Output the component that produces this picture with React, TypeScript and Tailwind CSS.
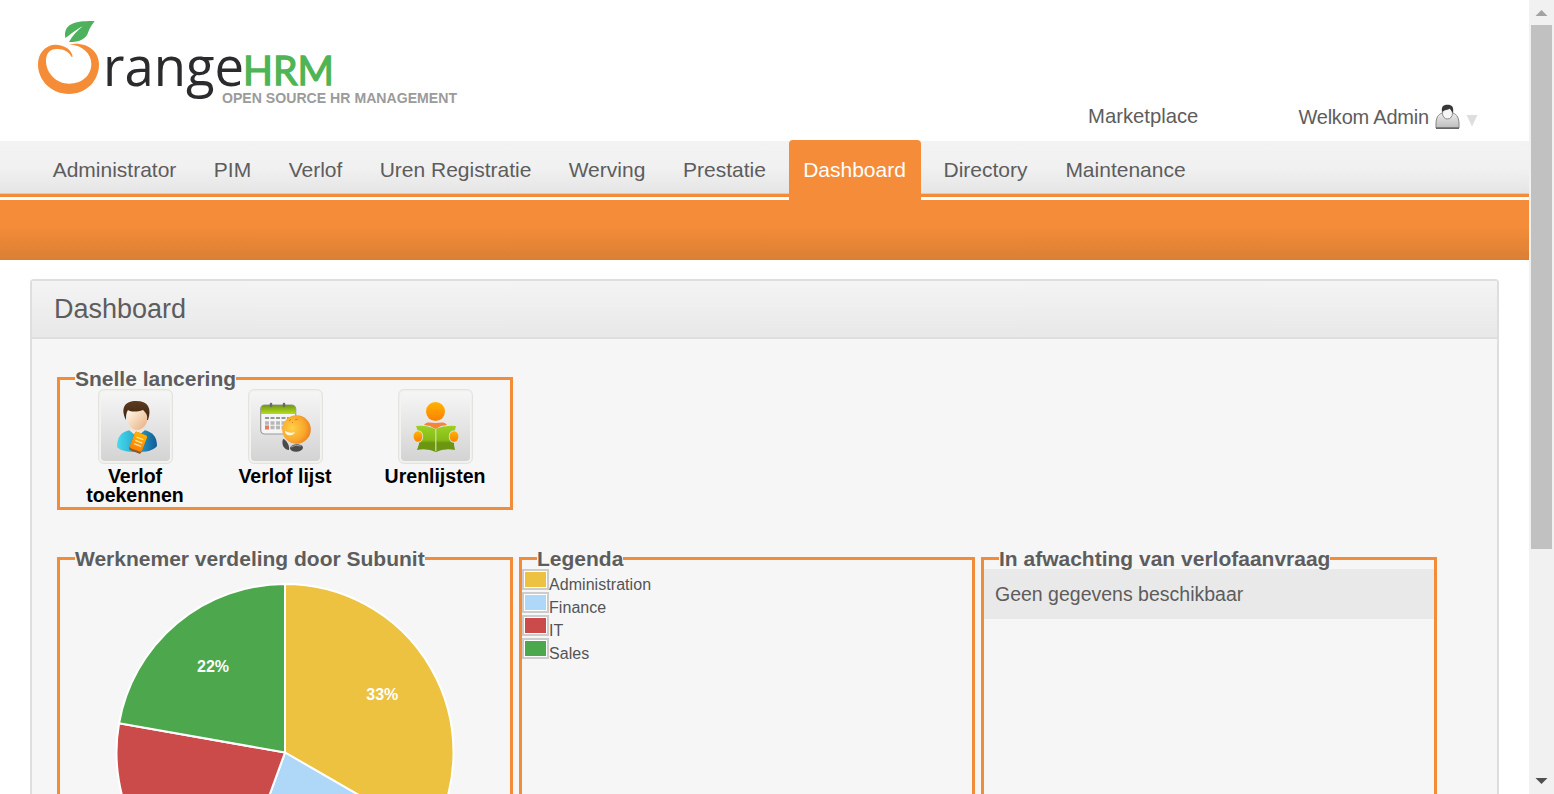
import React from "react";

const tabs = [
  { label: "Administrator", box: "w-[154px]" },
  { label: "PIM", box: "w-[67px]" },
  { label: "Verlof", box: "w-[84px]" },
  { label: "Uren Registratie", box: "w-[181px]" },
  { label: "Werving", box: "w-[107px]" },
  { label: "Prestatie", box: "w-[113px]" },
  { label: "Dashboard", box: "w-[132px]" },
  { label: "Directory", box: "w-[115px]" },
  { label: "Maintenance", box: "w-[150px]" },
];

const subunits = [
  { name: "Administration", swatch: "bg-[#edc240]" },
  { name: "Finance", swatch: "bg-[#afd8f8]" },
  { name: "IT", swatch: "bg-[#cb4b4b]" },
  { name: "Sales", swatch: "bg-[#4da74d]" },
];

function Logo() {
  return (
    <svg width="440" height="120" viewBox="0 0 440 120" className="block">
      <g transform="scale(0.33333)">
        <path
          d="M128 140C126 118 100 103 74 104C44 106 24 132 24 163C24 214 66 252 117 252C168 252 207 214 207 163C207 124 172 94 117 103C158 106 184 132 184 162C184 196 156 221 118 221C78 221 48 188 48 152C48 130 60 117 80 117C100 116 118 126 124 140Z"
          fill="#f58d38"
        />
        <path
          d="M194 33C150 33 98 34 106 84C120 75 134 62 158 49C140 65 126 78 117 96C150 96 170 86 175 65C186 42 190 40 194 33Z"
          fill="#4db25b"
        />
      </g>
      <text x="73" y="75.500" fontFamily="Open Sans" fontSize="55" fill="#2b2b2d" textLength="141" lengthAdjust="spacingAndGlyphs">range</text>
      <text x="213" y="74.500" fontFamily="Lato" fontSize="40.5" fill="#4db556" stroke="#4db556" strokeWidth="1.3" textLength="91" lengthAdjust="spacingAndGlyphs">HRM</text>
      <text x="192" y="93" fontFamily="Liberation Sans" fontWeight="700" fontSize="15.5" fill="#9b9b9b" textLength="235" lengthAdjust="spacingAndGlyphs">OPEN SOURCE HR MANAGEMENT</text>
    </svg>
  );
}

function UserIcon() {
  return (
    <svg width="25" height="26" viewBox="0 0 25 26" className="block">
      <defs>
        <linearGradient id="coat" x1="0" y1="0" x2="0" y2="1">
          <stop offset="0" stopColor="#ececec" />
          <stop offset="1" stopColor="#bdbdbd" />
        </linearGradient>
      </defs>
      <path d="M1 24V20C1 14 3 10.500 7 9H18C22 10.500 24 14 24 20V24Z" fill="url(#coat)" stroke="#858585" strokeWidth="1" />
      <path d="M1 24.200H24" stroke="#555" strokeWidth="1.300" />
      <ellipse cx="12.500" cy="9.500" rx="5" ry="5.500" fill="#f6f6f6" stroke="#888" strokeWidth="1" />
      <path d="M7 8C6 2 9 .8 12.500 .8C17 .8 19 3 18 9C17 8 16 6 15 4.500C13 6 9 6 7 8Z" fill="#383838" />
    </svg>
  );
}

function Tile({ children }: { children: React.ReactNode }) {
  return (
    <svg width="75" height="75" viewBox="0 0 75 75" className="block">
      <defs>
        <linearGradient id="tile" x1="0" y1="0" x2="0" y2="1">
          <stop offset="0" stopColor="#f6f6f6" />
          <stop offset="1" stopColor="#d3d3d3" />
        </linearGradient>
        <linearGradient id="hair" x1="0" y1="0" x2="0" y2="1">
          <stop offset="0" stopColor="#5c3b20" />
          <stop offset="1" stopColor="#3f2512" />
        </linearGradient>
        <linearGradient id="face" x1="0" y1="0" x2="1" y2="1">
          <stop offset="0.200" stopColor="#fff1e0" />
          <stop offset="1" stopColor="#e5a977" />
        </linearGradient>
        <linearGradient id="shirt" x1="0" y1="0" x2="1" y2="0">
          <stop offset="0" stopColor="#46dced" />
          <stop offset="0.450" stopColor="#2ba9cf" />
          <stop offset="1" stopColor="#125c96" />
        </linearGradient>
        <linearGradient id="amber" x1="0" y1="0" x2="0" y2="1">
          <stop offset="0" stopColor="#ffb400" />
          <stop offset="1" stopColor="#fa8005" />
        </linearGradient>
        <linearGradient id="top" x1="0" y1="0" x2="0" y2="1">
          <stop offset="0" stopColor="#6d9912" />
          <stop offset="1" stopColor="#b8dd1c" />
        </linearGradient>
        <radialGradient id="ball" cx="0.350" cy="0.450" r="0.700">
          <stop offset="0" stopColor="#ffd045" />
          <stop offset="0.650" stopColor="#faa62c" />
          <stop offset="1" stopColor="#e57b20" />
        </radialGradient>
        <linearGradient id="book" x1="0" y1="0" x2="0" y2="1">
          <stop offset="0" stopColor="#9bd023" />
          <stop offset="0.550" stopColor="#86bb17" />
          <stop offset="0.650" stopColor="#6c9510" />
          <stop offset="1" stopColor="#6c9510" />
        </linearGradient>
      </defs>
      <rect x="0.700" y="0.700" width="73.600" height="73.600" rx="5" fill="#f3f3ef" stroke="#dedfda" />
      <rect x="3" y="3" width="69" height="69" rx="4" fill="url(#tile)" />
      {children}
    </svg>
  );
}

function AssignLeaveIcon() {
  return (
    <Tile>
      <path d="M19 58C19 48 23 43 32 41H46C54 43 59 47 59 57C55 62 48 63 39 63C30 63 22 62 19 58Z" fill="url(#shirt)" />
      <path d="M31 41L39 48L47 41L44 37H34Z" fill="#f3e3d5" />
      <path d="M28 22C28 34 33 41 39 41C46 41 51 33 51 22L46 17H33Z" fill="url(#face)" />
      <path d="M28 31C22 19 27 12 38 12C50 12 54 19 50 31L49 31C50 26 48 24 45 21C39 23 33 23 30 21C28 24 28 27 28 31Z" fill="url(#hair)" />
      <g transform="rotate(21 40 54)">
        <rect x="33.500" y="44" width="13" height="19.500" rx="2" fill="#8b5a26" />
        <rect x="33.500" y="44" width="13" height="17.500" rx="2" fill="url(#amber)" />
        <path d="M36.500 49H44M36.500 52.500H44M36.500 56H44" stroke="#ffe4a3" strokeWidth="1.300" />
      </g>
    </Tile>
  );
}

function LeaveListIcon() {
  return (
    <Tile>
      <rect x="12.700" y="16" width="35" height="29" rx="4" fill="#f5f5f5" stroke="#999" strokeWidth="1.200" />
      <path d="M13 25V20Q13 16 17 16H43Q47.500 16 47.500 20V25Z" fill="url(#top)" />
      <path d="M23 15V17M36 15V17" stroke="#676b65" strokeWidth="2.500" strokeLinecap="round" />
      <path d="M17 29H42" stroke="#777" strokeWidth="1.500" strokeDasharray="4 1.500" />
      <path d="M17 34H38M22.500 38.500H38" stroke="#b7b7b7" strokeWidth="3.500" strokeDasharray="4 1.500" />
      <rect x="17" y="36.500" width="4" height="4" fill="#e97765" />
      <path d="M35 50C38 50 42 57 41 61C36 61 33 55 35 50Z" fill="#4b4b4b" />
      <ellipse cx="48.500" cy="59" rx="6.500" ry="3.700" transform="rotate(-5 48 59)" fill="#4b4b4b" />
      <path d="M43 58Q48 55 53 57" stroke="#a0a0a0" fill="none" />
      <circle cx="48.500" cy="40.500" r="14.300" fill="url(#ball)" />
      <path d="M37 42Q42 45 47 43Q45 47 40 46Q37 45 37 42Z" fill="#fff6df" />
      <path d="M41 32L43 30M47 31L50 30M44 34L45 33" stroke="#e37a23" />
    </Tile>
  );
}

function TimesheetIcon() {
  return (
    <Tile>
      <circle cx="37.500" cy="22.500" r="9.500" fill="url(#amber)" />
      <path d="M26 36C29 32 33 34 37.500 34C42 34 46 32 49 36L43 37L37.500 40L32 37Z" fill="#f78338" />
      <path d="M18 37Q29 36 37 40Q47 36 58 37L56 45V56L57 61Q46 59 38 63Q29 59 19 61L21 55V45Z" fill="url(#book)" />
      <path d="M37.800 40V62" stroke="#cfdfb0" strokeWidth="1.200" />
      <ellipse cx="20" cy="47.500" rx="5.200" ry="6.300" fill="#e0e0db" />
      <ellipse cx="56" cy="47.500" rx="5.200" ry="6.300" fill="#e0e0db" />
      <ellipse cx="20" cy="47.500" rx="4.400" ry="5.200" fill="url(#amber)" />
      <ellipse cx="56" cy="47.500" rx="4.400" ry="5.200" fill="url(#amber)" />
    </Tile>
  );
}

const shortcuts = [
  { label: "Verlof toekennen", Icon: AssignLeaveIcon },
  { label: "Verlof lijst", Icon: LeaveListIcon },
  { label: "Urenlijsten", Icon: TimesheetIcon },
];

function Box({ title, size, children }: { title: string; size: string; children: React.ReactNode }) {
  return (
    <fieldset className={`w-[456px] shrink-0 border-[3px] border-[#f28c38] ${size}`}>
      <legend className="ml-[15px] h-[21px] text-[21px] leading-[21px] font-bold whitespace-nowrap text-[#5d5d5d]">{title}</legend>
      {children}
    </fieldset>
  );
}

function Pie() {
  return (
    <svg width="450" height="370" viewBox="0 0 450 370" className="block">
      <g stroke="#fff" strokeWidth="2" strokeLinejoin="round">
        <path d="M225 183.500V15A168.500 168.500 0 0 1 370.920 267.750Z" fill="#edc240" />
        <path d="M225 183.500L370.920 267.750A168.500 168.500 0 0 1 167.370 341.840Z" fill="#afd8f8" />
        <path d="M225 183.500L167.370 341.840A168.500 168.500 0 0 1 59.060 154.240Z" fill="#cb4b4b" />
        <path d="M225 183.500L59.060 154.240A168.500 168.500 0 0 1 225 15Z" fill="#4da74d" />
      </g>
      <g fill="#fff" fontFamily="Liberation Sans" fontWeight="700" fontSize="16" textAnchor="middle">
        <text x="153" y="103">22%</text>
        <text x="322.300" y="131">33%</text>
      </g>
    </svg>
  );
}

export default function App() {
  return (
    <div className="flex h-[794px] w-[1554px] overflow-hidden bg-white font-['Liberation_Sans',Arial,sans-serif] text-[#5d5d5d]">
      <div className="flex h-full w-[1529px] flex-col overflow-hidden">
        <header className="flex h-[140px] shrink-0 items-start justify-between pt-[10px] pl-[30px]">
          <Logo />
          <div className="flex items-start pr-[51px] pt-[93px]">
            <a className="mr-[100px] text-[20.25px] leading-[26px]">Marketplace</a>
            <a className="mt-[1px] text-[20px] leading-[26px] tracking-[-0.2px]">Welkom Admin</a>
            <span className="mt-[1px] ml-[6px]"><UserIcon /></span>
            <svg width="12" height="12" viewBox="0 0 12 12" className="mt-[12px] ml-[6px]">
              <path d="M0.500 0H11.500L6 11.500Z" fill="#dedede" />
            </svg>
          </div>
        </header>

        <nav className="flex h-[60px] shrink-0 gap-[7.500px] bg-[linear-gradient(to_bottom,#fff_0,#fff_1px,#f3f3f3_1px,#f1f1f1_28px,#e5e5e5_53px,#dbc9bd_53px,#dbc9bd_54px,#f28c38_54px,#f28c38_57px,#fff_57px)] pl-[37.500px]">
          {tabs.map((t) => (
            <a
              key={t.label}
              className={`flex h-[60px] justify-center pt-[17px] text-[21px] leading-[26px] whitespace-nowrap ${t.box} ${
                t.label === "Dashboard" ? "rounded-t-[4px] bg-[#f48c39] text-white" : ""
              }`}
            >
              {t.label}
            </a>
          ))}
        </nav>
        <div className="h-[60px] shrink-0 bg-[linear-gradient(to_bottom,#f48c39_0,#f48c39_45%,#dc8034_95%,#d68138_100%)]" />

        <main className="mx-[30px] mt-[19px] flex h-[800px] shrink-0 flex-col rounded-t-[4px] border-2 border-[#dedede] bg-[#f6f6f6]">
          <h1 className="h-[58px] shrink-0 border-b-2 border-[#dedede] bg-linear-to-b from-[#f4f4f4] to-[#e8e8e8] pt-[12px] pl-[22px] text-[27px] leading-[32px]">
            Dashboard
          </h1>
          <div className="flex flex-col gap-[38px] pt-[29px] pl-[25px]">
            <Box title="Snelle lancering" size="h-[142px]">
              <div className="flex">
                {shortcuts.map(({ label, Icon }) => (
                  <a key={label} className="flex w-[150px] flex-col items-center text-center text-[19.500px] leading-[19px] font-bold text-black">
                    <Icon />
                    <span className="mt-[3px] w-[110px]">{label}</span>
                  </a>
                ))}
              </div>
            </Box>
            <div className="flex gap-[6px]">
              <Box title="Werknemer verdeling door Subunit" size="h-[600px]">
                <Pie />
              </Box>
              <Box title="Legenda" size="h-[600px]">
                <ul className="flex flex-col gap-[2px]">
                  {subunits.map((s) => (
                    <li key={s.name} className="flex h-[21px] items-start">
                      <span className="h-[21px] w-[27px] border-2 border-[#ccc] bg-white p-px">
                        <span className={`block h-[15px] w-[21px] ${s.swatch}`} />
                      </span>
                      <span className="pt-[5px] text-[16px] leading-[21px] tracking-[0.05px] text-[#545454]">{s.name}</span>
                    </li>
                  ))}
                </ul>
              </Box>
              <Box title="In afwachting van verlofaanvraag" size="h-[600px]">
                <p className="h-[50px] bg-[#e9e9e9] pt-[12px] pl-[11px] text-[19.500px] leading-[26px]">Geen gegevens beschikbaar</p>
              </Box>
            </div>
          </div>
        </main>
      </div>

      <aside className="flex h-full w-[25px] flex-col items-center justify-between bg-[#f1f1f1]">
        <svg width="25" height="25" viewBox="0 0 25 25"><path d="M6.500 16H18.500L12.500 10Z" fill="#a3a3a3" /></svg>
        <div className="mb-auto h-[524px] w-[21px] bg-[#c1c1c1]" />
        <svg width="25" height="25" viewBox="0 0 25 25"><path d="M6.500 9H18.500L12.500 15Z" fill="#505050" /></svg>
      </aside>
    </div>
  );
}
